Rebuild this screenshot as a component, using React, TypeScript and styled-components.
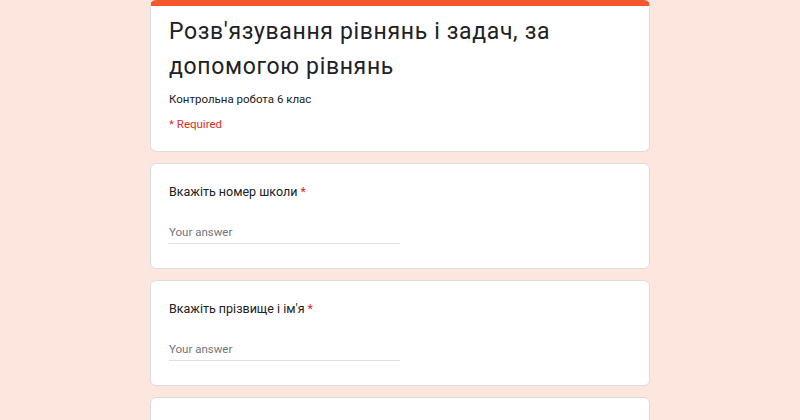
import React from "react";
import styled, { createGlobalStyle } from "styled-components";

const GlobalStyle = createGlobalStyle`
  html, body {
    margin: 0;
    padding: 0;
    background: #fce6de;
  }
  body {
    font-family: Roboto, "Noto Sans", sans-serif;
    color: #202124;
  }
`;

const Page = styled.div`
  width: 500px;
  margin: 0 auto;
  display: flex;
  flex-direction: column;
  gap: 11px;
  height: 420px;
  overflow: hidden;
`;

const Card = styled.section<{ $header?: boolean }>`
  background: #fff;
  border: 1px solid #dadce0;
  border-radius: 6px;
  box-sizing: border-box;
  padding: ${(p) => (p.$header ? "8px 18px 19px" : "19px 18px 24px")};
  ${(p) => (p.$header ? "border-top: 6px solid #f4582c;" : "")}
  flex-shrink: 0;
`;

const Title = styled.h1`
  margin: 0;
  font-family: Roboto, "Noto Sans", sans-serif;
  font-weight: 400;
  font-size: 23px;
  letter-spacing: 0.65px;
  line-height: 35px;
  color: #202124;
`;

const Description = styled.p`
  margin: 7px 0 0;
  font-size: 11.5px;
  line-height: 16px;
  color: #202124;
`;

const Required = styled.p`
  margin: 9px 0 0;
  font-size: 11.5px;
  line-height: 16px;
  color: #d93025;
`;

const Question = styled.div`
  font-size: 12.5px;
  line-height: 18px;
  color: #202124;
`;

const Star = styled.span`
  color: #d93025;
  margin-left: 3px;
`;

const Answer = styled.div`
  margin-top: 22px;
  width: 231px;
  border-bottom: 1px solid #e0e0e0;
  font-size: 11.5px;
  line-height: 18px;
  padding-bottom: 2px;
  color: #70757a;
`;

const questions = ["Вкажіть номер школи", "Вкажіть прізвище і ім'я", "Вкажіть клас"];

export default function App() {
  return (
    <>
      <GlobalStyle />
      <Page>
        <Card $header>
          <Title>Розв'язування рівнянь і задач, за допомогою рівнянь</Title>
          <Description>Контрольна робота 6 клас</Description>
          <Required>* Required</Required>
        </Card>
        {questions.map((q) => (
          <Card key={q}>
            <Question>
              {q}
              <Star>*</Star>
            </Question>
            <Answer>Your answer</Answer>
          </Card>
        ))}
      </Page>
    </>
  );
}
